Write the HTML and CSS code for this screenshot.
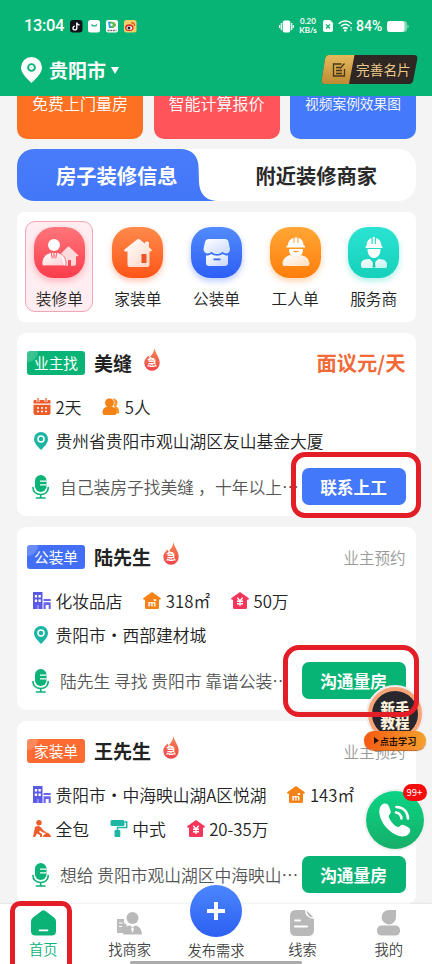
FILE: index.html
```html
<!DOCTYPE html>
<html lang="zh-CN">
<head>
<meta charset="utf-8">
<title>装修</title>
<link rel="stylesheet" href="styles.css">
</head>
<body>
<svg class="defs" width="0" height="0">
  <defs>
    <linearGradient id="gw" x1="0" y1="0" x2="1" y2="1"><stop offset="0" stop-color="#fff"/><stop offset="1" stop-color="#fff" stop-opacity=".72"/></linearGradient>
    <linearGradient id="gf" x1="0" y1="0" x2="0" y2="1"><stop offset="0" stop-color="#f58a50"/><stop offset="1" stop-color="#f0434a"/></linearGradient>
    <symbol id="flame" viewBox="0 0 16 23"><path d="M10.5 0C11 5 15.7 9 15.7 15A7.7 7.7 0 0 1 .3 15C.3 11 3 9.500 4.200 7.500C5 8 5 9 5.200 9.600C8 7.500 10 4 10.500 0Z" fill="url(#gf)"/><text x="8" y="18" text-anchor="middle" font-size="10" font-weight="700" fill="#fff">急</text></symbol>
    <symbol id="pin" viewBox="0 0 14 18"><path d="M7 0a7 7 0 0 1 7 7c0 4-3.500 7.500-7 11C3.500 14.500 0 11 0 7a7 7 0 0 1 7-7Z" fill="#1cb5a3"/><circle cx="7" cy="7" r="3" fill="none" stroke="#fff" stroke-width="1.500"/></symbol>
    <symbol id="mic" viewBox="0 0 17 24"><rect x="3" y="0" width="11.500" height="17" rx="5.700" fill="#0bb377"/><path d="M8 6.200h6.500M8 9.800h6.500" stroke="#fff" stroke-width="1.300"/><path d="M1 12.500c0 4 3 7 7.700 7s7.500-3 7.500-7M8.700 19.500v3.500M4.500 23h8.500" fill="none" stroke="#0bb377" stroke-width="1.700" stroke-linecap="round"/></symbol>
    <symbol id="building" viewBox="0 0 18 17"><path d="M0 0h9.500v17H0Z" fill="#5a58e6"/><path d="M1.800 3h2.300v2.400H1.800ZM5.500 3h2.300v2.400H5.500ZM1.800 7.600h2.300V10H1.800ZM5.500 7.600h2.300V10H5.500Z" fill="#fff"/><path d="M4 13.500h2V17H4ZM10.500 7h7.200v2h-7.200ZM10.500 10.200h7.200V17h-2v-4h-3v4h-2.200Z" fill="#6865e9"/><path d="M3.800 13h2.200v4H3.800Z" fill="#8d8bf0"/></symbol>
    <symbol id="area" viewBox="0 0 18 17"><path d="M9 0l8.500 6c.8.700.4 1.700-.5 1.700h-1V15.500c0 .9-.5 1.500-1.500 1.500h-11C2.500 17 2 16.400 2 15.500V7.700H1C.1 7.700-.3 6.700.5 6Z" fill="#f58216"/><text x="9" y="13.500" text-anchor="middle" font-size="8.500" font-weight="700" fill="#fff">㎡</text></symbol>
    <symbol id="money" viewBox="0 0 18 17"><path d="M9 0l8.500 6c.8.700.4 1.700-.5 1.700h-1V15.500c0 .9-.5 1.500-1.500 1.500h-11C2.500 17 2 16.400 2 15.500V7.700H1C.1 7.700-.3 6.700.5 6Z" fill="#f5365a"/><path d="M6.300 5.800L9 9l2.700-3.200M9 9v5M6 9.300h6M6 11.700h6" fill="none" stroke="#fff" stroke-width="1.400"/></symbol>
  </defs>
</svg>
<div class="phone">
  <header class="header">
    <div class="status">
      <span class="clock">13:04</span>
      <svg class="apps" width="67" height="13" viewBox="0 0 67 13">
        <rect width="12.500" height="12.500" rx="3" fill="#10131c"/><path d="M6.800 2.500v5.500a1.900 1.900 0 1 1-1.900-1.900M6.800 2.500c.2 1.600 1.200 2.400 2.700 2.500" fill="none" stroke="#fff" stroke-width="1.400"/>
        <rect x="18" width="12" height="12.500" rx="2.500" fill="#fff"/><path d="M21.500 4.500c.7 2 4.700 2 5.400 0" fill="none" stroke="#12a56d" stroke-width="1.200"/>
        <rect x="36" width="12" height="12.500" rx="2" fill="#fff"/><path d="M38 1.500l5.500 1v5.500L39 8Z" fill="#269ee4"/><path d="M40 1.500c3 0 6 1.500 6 3.500s-3 3-5 3Z" fill="#62ba42"/><circle cx="41.500" cy="4.700" r="1.200" fill="#fff"/><path d="M37.500 10.500h9" stroke="#777" stroke-dasharray="2 .7" stroke-width="1.500"/>
        <rect x="54" width="12.500" height="12.500" rx="2.500" fill="#f7d066"/><ellipse cx="59.300" cy="7.700" rx="4.300" ry="3.400" fill="#db3232"/><ellipse cx="59.300" cy="8" rx="2.800" ry="2.100" fill="#fff"/><circle cx="59" cy="8" r="1.500" fill="#222"/><path d="M61 3c2.500-.6 4 .8 3.300 3" fill="none" stroke="#db4932" stroke-width="1.200"/>
      </svg>
      <span class="grow"></span>
      <svg width="15" height="13" viewBox="0 0 15 13"><rect x="3.700" y=".5" width="7.600" height="12" rx="1.800" fill="#fff"/><path d="M2.300 3v7M12.700 3v7M.6 5v3M14.400 5v3" stroke="#fff" stroke-width="1.200"/></svg>
      <span class="speed"><span>0.20</span><span>KB/s</span></span>
      <svg class="sim" width="10" height="12" viewBox="0 0 10 12"><path d="M2 0h5l3 3v7a2 2 0 0 1-2 2H2a2 2 0 0 1-2-2V2a2 2 0 0 1 2-2Z" fill="#fff"/><path d="M3 4.500l4 4M7 4.500l-4 4" stroke="#07b475" stroke-width="1.300"/></svg>
      <svg class="wifi" width="15" height="12" viewBox="0 0 15 12"><path d="M.7 3.700C4.500.2 10 .2 13.800 3.700M3 6.200c2.600-2.300 6-2.300 8.600 0M5 8.600c1.500-1.300 3.100-1.300 4.600 0" fill="none" stroke="#fff" stroke-width="1.500"/><circle cx="7.300" cy="10.500" r="1.300" fill="#fff"/><path d="M13 7v4" stroke="#fff" stroke-width="1.200" stroke-dasharray="1.500 .8"/></svg>
      <span class="pct">84%</span>
      <svg class="batt" width="22" height="11" viewBox="0 0 22 11"><rect width="20" height="11" rx="3" fill="#7bd7b3"/><rect width="17.500" height="11" rx="3" fill="#fff"/><path d="M20.500 3.500c1.500.5 1.500 3.500 0 4Z" fill="#9fe2c8"/></svg>
    </div>
    <div class="city">
      <svg width="21" height="26" viewBox="0 0 21 26"><path d="M10.500 0A10.500 10.500 0 0 1 21 10.500c0 6-6 11-10.500 15.500C6 21.500 0 16.500 0 10.500A10.500 10.500 0 0 1 10.500 0Z" fill="#fff"/><circle cx="10.500" cy="10.500" r="3.400" fill="none" stroke="#07b475" stroke-width="1.900"/></svg>
      <b>贵阳市</b>
      <svg class="caret" width="8" height="7" viewBox="0 0 8 7"><path d="M0 0h8L4 7Z" fill="#fff"/></svg>
      <span class="grow"></span>
      <div class="vip">
        <svg class="vipbg" width="97" height="29" viewBox="0 0 97 29"><defs><linearGradient id="gg" x1="0" y1="0" x2="0" y2="1"><stop offset="0" stop-color="#e6b95d"/><stop offset="1" stop-color="#bd8b33"/></linearGradient></defs><path d="M8 0h85q4 0 3.300 4l-4 21q-.8 4-4.300 4H4q-4 0-3.300-4L4 4Q4.800 0 8 0Z" fill="#2f2723"/><path d="M8 0h25.500L28 29H4q-4 0-3.300-4L4 4Q4.800 0 8 0Z" fill="url(#gg)"/><path d="M20.500 9h-8v12h11v-7M15 12.500h4M15 15.500h6M15 18.500h6M19 13.500l4.500-5" fill="none" stroke="#493719" stroke-width="1.300"/></svg>
        <span>完善名片</span>
      </div>
    </div>
  </header>

  <main class="content">
    <section class="banners">
      <div class="banner b1">免费上门量房</div>
      <div class="banner b2">智能计算报价</div>
      <div class="banner b3">视频案例效果图</div>
    </section>

    <section class="tabs">
      <svg class="tabbg" width="199" height="52" viewBox="0 0 199 52"><defs><linearGradient id="gt" x1="0" y1="0" x2="0" y2="1"><stop offset="0" stop-color="#497cfa"/><stop offset="1" stop-color="#4277f8"/></linearGradient></defs><path d="M18 0h145c12 0 18 7 18.500 17l.5 16c.4 11 6 18 17 19H18C7 52 0 45 0 34V18C0 7 7 0 18 0Z" fill="url(#gt)"/></svg>
      <b class="tab on">房子装修信息</b><b class="tab">附近装修商家</b>
    </section>

    <section class="cats">
      <div class="cat sel"><div class="ic c1"><svg width="51" height="51" viewBox="0 0 51 51"><path d="M27 26.500l6.500-6.500q1-.8 2 0l8.500 8q.8 1-.5 1.300H42V37q0 1.800-1.800 1.800H37V33h-3v5.800h-4Z" fill="#fff" opacity=".78"/><path d="M8 37c0-7 4-10.500 9-11.500h6c5.500 1 9 4.500 9 11.500q0 1.800-1.500 1.800h-21Q8 38.800 8 37Z" fill="url(#gw)" stroke="#f65562" stroke-width=".8"/><circle cx="20" cy="18" r="6" fill="#fff"/><path d="M17.300 25.500l.9 6M22.700 25.500l-.9 6" fill="none" stroke="#f8616b" stroke-width="1"/><path d="M19.200 25.500h1.600l.7 4.500-1.500 1.500-1.500-1.500Z" fill="#f8616b" opacity=".6"/></svg></div><span>装修单</span></div>
      <div class="cat"><div class="ic c2"><svg width="51" height="51" viewBox="0 0 51 51"><path d="M25 12.500q1.500-1 3 0l5 4.200v-1.500q2-1.500 4 0v5l2.500 2.300q1 1.300-.5 2h-1.500V37.500q0 2.500-2.500 2.500H18q-2.500 0-2.500-2.500V24.500H13q-1.500-.7-.5-2Z" fill="url(#gw)"/><rect x="29.500" y="27" width="5" height="9" fill="#ed5524"/></svg></div><span>家装单</span></div>
      <div class="cat"><div class="ic c3"><svg width="51" height="51" viewBox="0 0 51 51"><path d="M15 28.500c2 .3 4-.5 5.300-1.500 3 2.300 8.400 2.300 11.400 0 1.300 1 3.300 1.800 5.300 1.500V36q0 3-3 3H18q-3 0-3-3Z" fill="url(#gw)"/><path d="M18 12h16q3 0 3.500 3l1.500 7c.3 5-5 5.500-7.500 2.700-3 3.200-8 3.200-11 0C18 27.500 12.500 27 12.500 22L14 15q.8-3 4-3Z" fill="url(#gw)"/><rect x="22.500" y="31.500" width="7" height="1.800" fill="#346be9"/></svg></div><span>公装单</span></div>
      <div class="cat"><div class="ic c4"><svg width="51" height="51" viewBox="0 0 51 51"><path d="M18 18c0-4 3-6.500 5.500-7v5h1v-5.500h3v5.500h1v-5c3 .7 5 3.500 5 7l1.500 1v1.500H16.500V19Z" fill="#fff"/><path d="M19 22h14c0 6-3 8-7 8s-7-2-7-8Z" fill="#fff"/><path d="M23.500 24.500h5" stroke="#f49727" stroke-width="1.300"/><path d="M12.500 36.500C13 30 19 27.500 22 28.500c2 2 6 2 8 0 4-.5 9 2 9.500 8q0 2.500-2 2.500h-23q-2 0-2-2.500Z" fill="url(#gw)"/></svg></div><span>工人单</span></div>
      <div class="cat"><div class="ic c5"><svg width="51" height="51" viewBox="0 0 51 51"><path d="M18.500 19c0-5 3-7.500 5-8v6h1.300v-7h2v7H28v-6c3 .7 5.500 4 5.500 8l1 1v1H17.500v-1Z" fill="#fff"/><path d="M19.500 22h13c0 6-3 9-6.500 9s-6.500-3-6.500-9Z" fill="#fff"/><path d="M13 39c-.5-5 2-6.500 8.500-7l4.500 4 4.500-4c6.500.5 9 2 8.500 7 0 1.500-.5 2-2 2H15q-2 0-2-2Z" fill="url(#gw)"/><path d="M24.500 34.500h3l-.5 2 .5 4h-3l.5-4Z" fill="#1bc7ae"/></svg></div><span>服务商</span></div>
    </section>

    <article class="card">
      <div class="top"><span class="tag green">业主找</span><b>美缝</b><svg class="flame" width="16" height="23"><use href="#flame"/></svg><span class="grow"></span><b class="price">面议元/天</b></div>
      <div class="row">
        <span class="item i1"><svg width="17" height="17" viewBox="0 0 17 17"><path d="M0 3q0-1 1-1h15q1 0 1 1v2.500H0ZM0 6.700h17V15q0 2-2 2H2q-2 0-2-2Z" fill="#ee5b2b"/><path d="M4.500 0v4M12.500 0v4" stroke="#fff" stroke-width="3"/><path d="M4.500 0v4M12.500 0v4" stroke="#ee5b2b" stroke-width="1.300"/><path d="M3.500 10h2M7.500 10h2M11.500 10h2M3.500 13.500h2M7.500 13.500h2M11.500 13.500h2" stroke="#fff" stroke-width="1.600"/></svg>2天</span>
        <span class="item"><svg width="17" height="17" viewBox="0 0 17 17"><path d="M10.500.5c5 0 5.500 5.500 3 8 2 .8 3.500 3 3.300 5.500q0 1.500-1.500 1.500H13Z" fill="#f9972e"/><circle cx="7" cy="4.800" r="4.800" fill="#f58216" stroke="#fff" stroke-width=".7"/><path d="M0 14.500C0 10 3 8.500 7 8.500s7 1.500 7 6q0 2.500-2 2.500H2q-2 0-2-2.500Z" fill="#f58216"/></svg>5人</span>
      </div>
      <div class="row"><span class="item"><svg class="pin" width="14" height="18"><use href="#pin"/></svg>贵州省贵阳市观山湖区友山基金大厦</span></div>
      <div class="foot"><svg width="17" height="24"><use href="#mic"/></svg><p>自己装房子找美缝<span class="comma">，</span>十年以上<span class="dots">⋯</span></p><b class="btn blue">联系上工</b></div>
    </article>

    <article class="card">
      <div class="top"><span class="tag bluet">公装单</span><b>陆先生</b><svg class="flame" width="16" height="23"><use href="#flame"/></svg><span class="grow"></span><span class="note">业主预约</span></div>
      <div class="row">
        <span class="item"><svg width="18" height="17"><use href="#building"/></svg>化妆品店</span>
        <span class="item"><svg width="18" height="17"><use href="#area"/></svg>318㎡</span>
        <span class="item"><svg width="18" height="17"><use href="#money"/></svg>50万</span>
      </div>
      <div class="row"><span class="item"><svg class="pin" width="14" height="18"><use href="#pin"/></svg>贵阳市・西部建材城</span></div>
      <div class="foot"><svg width="17" height="24"><use href="#mic"/></svg><p>陆先生 寻找 贵阳市 靠谱公装<span class="dots">⋯</span></p><b class="btn">沟通量房</b></div>
    </article>

    <article class="card">
      <div class="top"><span class="tag orange">家装单</span><b>王先生</b><svg class="flame" width="16" height="23"><use href="#flame"/></svg><span class="grow"></span><span class="note">业主预约</span></div>
      <div class="row">
        <span class="item"><svg width="18" height="17"><use href="#building"/></svg>贵阳市・中海映山湖A区悦湖</span>
        <span class="item"><svg width="18" height="17"><use href="#area"/></svg>143㎡</span>
      </div>
      <div class="row">
        <span class="item"><svg width="18" height="17" viewBox="0 0 18 17"><circle cx="6" cy="2.700" r="2.700" fill="#ee5b2b"/><path d="M2 7q3-2 5.500 0l3.500 4 2.500 1-.5 1.300-3.500-1L7 10.500 6 12l3 2v3H7v-2L4 13.500 2 17H0Z" fill="#ee5b2b"/><path d="M10 17c0-2 1.500-2.500 2.500-3.500l1.500-1 2 1c.5 1.300 2 1.500 2 3.500Z" fill="#ee5b2b"/></svg>全包</span>
        <span class="item"><svg width="17" height="17" viewBox="0 0 17 17"><rect x="0" y="0" width="14" height="6" rx="1.500" fill="#1fb6a3"/><path d="M14 2h2.200v5.500H7V11" fill="none" stroke="#1fb6a3" stroke-width="1.500"/><rect x="4" y="10" width="5.800" height="7" rx="1" fill="#1fb6a3"/></svg>中式</span>
        <span class="item"><svg width="18" height="17"><use href="#money"/></svg>20-35万</span>
      </div>
      <div class="foot"><svg width="17" height="24"><use href="#mic"/></svg><p>想给 贵阳市观山湖区中海映山<span class="dots">⋯</span></p><b class="btn">沟通量房</b></div>
    </article>
  </main>

  <div class="guide">
    <div class="disc"><span>新手</span><span>教程</span></div>
    <div class="pill"><svg width="5" height="7" viewBox="0 0 5 7"><path d="M0 0l5 3.500L0 7Z" fill="#291305"/></svg>点击学习</div>
  </div>
  <div class="call"><svg width="58" height="58" viewBox="0 0 58 58"><path d="M17 13c2.500-1.200 5 0 6 2.500l1.500 4c.8 2-.3 3.500-1.500 5-.7 1 0 2.500 1.500 5s4 5 6 6c1.500.8 2.500.5 3.500-.5 1.500-1.500 3-1.500 5-.5l3.500 2c2 1 2.300 3.500 1 5.500C41 45.500 37 46 33 45 23 42 15 32 13.500 23c-.7-4.500.5-8.500 3.500-10Z" fill="#fff"/><path d="M30 21.500c3.500.7 5 2.500 5.500 6M30.500 16c6.500.3 11 4.500 11.500 11.500" fill="none" stroke="#fff" stroke-width="2.600" stroke-linecap="round"/></svg><span class="badge">99+</span></div>

  <nav class="nav">
    <div class="nv on"><svg width="25" height="26" viewBox="0 0 25 26"><path d="M10.500 1q2-1.400 4 0l8.500 6.500q2 1.500 2 4V21q0 4.500-4.500 4.500h-16Q0 25.500 0 21V11.500q0-2.500 2-4Z" fill="#0bb377"/><path d="M8.500 20.300h8" stroke="#fff" stroke-width="1.700" stroke-linecap="round"/></svg><span>首页</span></div>
    <div class="nv n2"><svg width="25" height="23" viewBox="0 0 25 23"><path d="M0 7h7v4l3 2-3 8H0Z" fill="#bbb"/><path d="M2 11h3.500M2 14.500h3" stroke="#fff" stroke-width="1.200"/><circle cx="15.500" cy="6" r="6" fill="#b9b9b9"/><path d="M6 22.500c.5-6 3-8.500 7-9l2.500 2 2.500-2c4 .5 6.500 3 7 9Z" fill="#b9b9b9"/><path d="M15.500 15l-1.500 2 1.500 4 1.500-4Z" fill="#fff"/></svg><span>找商家</span></div>
    <div class="nv n3"><i class="plus"></i><span>发布需求</span></div>
    <div class="nv n4"><svg width="24" height="26" viewBox="0 0 24 26"><path d="M6 0h9q0 8 9 9v11q0 6-6 6H6q-6 0-6-6V6q0-6 6-6Z" fill="#b9b9b9"/><path d="M16.500.5l7 7q-6.500-.5-7-7Z" fill="#b9b9b9"/><path d="M5 10.500h5M5 16.500h12" stroke="#fff" stroke-width="2" stroke-linecap="round"/></svg><span>线索</span></div>
    <div class="nv n4"><svg width="23" height="26" viewBox="0 0 23 26"><path d="M12 0h7v7a7.200 7.200 0 1 1-7-7Z" fill="#b9b9b9"/><rect x="0" y="15.500" width="23" height="10" rx="4.500" fill="#b9b9b9"/></svg><span>我的</span></div>
    <i class="bar"></i>
  </nav>

  <div class="mark m1"></div><div class="mark m2"></div><div class="mark m3"></div>
</div>
</body>
</html>
```
FILE: styles.css
```css
* { box-sizing: border-box; }
body { margin: 0; font-family: "Noto Sans CJK SC", sans-serif; font-weight: 350; color: #222; }
b { font-weight: 700; }
svg { display: block; flex: none; }
.defs { position: absolute; }
.phone { position: relative; width: 432px; height: 964px; overflow: hidden; background: #f4f4f4; }
.grow { flex: 1; }

.header { height: 96px; background: #07b475; color: #fff; }
.status { height: 51px; display: flex; align-items: center; padding: 1px 23px 0 24px; }
.clock { width: 46px; font: 500 16.500px/20px Roboto, sans-serif; letter-spacing: -.4px; }
.speed { display: flex; flex-direction: column; align-items: center; width: 20px; margin-left: 4px; font: 700 8px/9px Lato, sans-serif; }
.sim { margin-left: 5px; }
.wifi { margin-left: 5px; }
.pct { width: 29px; margin-left: 3px; font: 500 14px/16px Roboto, sans-serif; white-space: nowrap; }
.batt { margin-left: 2px; }
.city { height: 38px; display: flex; align-items: center; padding: 0 14px 0 21px; }
.city b { margin-left: 7px; font-size: 19px; line-height: 28px; }
.caret { margin-left: 5px; }
.vip { position: relative; width: 97px; height: 29px; margin-top: -1px; padding-left: 35px; font-size: 13.700px; line-height: 28px; color: #ebc98b; font-weight: 400; }
.vipbg { position: absolute; left: 0; top: 0; }
.vip span { position: relative; white-space: nowrap; }

.content { padding: 0 16px 0 17px; }
.banners { display: grid; grid-template-columns: repeat(3, 126px); justify-content: space-between; }
.banner { height: 42.500px; border-radius: 0 0 10px 10px; color: #fff; font-size: 16px; line-height: 15px; text-align: center; white-space: nowrap; }
.b1 { background: #ff7122; }
.b2 { background: #ff555a; }
.b3 { background: #4579fb; font-size: 13.700px; }
.tabs { position: relative; height: 52px; margin-top: 10.500px; display: flex; background: #fff; border-radius: 18px; }
.tabbg { position: absolute; left: 0; top: 0; }
.tab { position: relative; flex: 1; text-align: center; font-size: 20.300px; line-height: 53px; color: #292929; font-weight: 700; }
.tab.on { color: #fff; }
.cats { height: 110px; margin-top: 11px; padding: 9px 3px 10px 3px; background: #fff; border-radius: 8px; display: flex; }
.cat { flex: 1; display: flex; flex-direction: column; align-items: center; margin: 0 5.200px; padding-top: 5px; border: 1px solid transparent; border-radius: 10px; font-size: 15.700px; line-height: 22px; white-space: nowrap; }
.sel { background: #ffedf1; border-color: #eda7b5; }
.ic { width: 51px; height: 51px; border-radius: 20px; margin-bottom: 10px; }
.c1 { background: linear-gradient(#ff767a, #fb3c4c); box-shadow: 0 3px 6px #fb3c4c55; }
.c2 { background: linear-gradient(#ff8a4c, #ff5518); box-shadow: 0 3px 6px #ff551855; }
.c3 { background: linear-gradient(#528bfb, #2c5ef5); box-shadow: 0 3px 6px #2c5ef555; }
.c4 { background: linear-gradient(#ffa636, #ff7e0b); box-shadow: 0 3px 6px #ff7e0b55; }
.c5 { background: linear-gradient(#2be3d2, #15d0ba); box-shadow: 0 3px 6px #15d0ba55; }

.card { height: 183.500px; margin-top: 10.500px; padding: 15px 10.500px 0 10px; background: #fff; border-radius: 9px; }
.top { height: 30px; display: flex; align-items: center; }
.tag { width: 58px; height: 24px; border-radius: 3px; color: #fff; font-size: 14.700px; line-height: 23px; text-align: center; font-weight: 400; margin-right: 9px; background: radial-gradient(circle at 0 0, #ffffff33 0 10px, transparent 12px) #07b475; }
.bluet { background-color: #426ff6; }
.orange { background-color: #fb6b32; }
.top b { font-size: 19px; line-height: 30px; }
.flame { margin: -6px 0 0 12px; }
.top .price { color: #f26a38; font-size: 20.300px; font-weight: 700; line-height: 31px; }
.note { font-size: 15.500px; color: #999; }
.row { height: 34px; display: flex; align-items: center; gap: 20.800px; padding-left: 6px; font-size: 16.750px; line-height: 34px; white-space: nowrap; }
.top + .row { margin-top: 12px; }
.item { display: flex; align-items: center; }
.item svg { width: 18px; margin-right: 4.500px; }
.item svg.pin { width: 14px; margin: 0 7.500px 0 1px; }
.foot { height: 37px; margin-top: 10.500px; display: flex; align-items: center; padding-left: 5px; }
.foot p { flex: 1; margin: 0 0 0 11px; font-size: 16.750px; line-height: 38px; color: #555; white-space: nowrap; }
.comma { display: inline-block; width: 21px; padding-left: 4px; }
.dots { display: inline-block; width: 14px; }
.btn { flex: none; width: 104px; height: 37px; border-radius: 7px; background: #07b475; color: #fff; text-align: center; font-size: 16.700px; line-height: 38px; font-weight: 700; }
.blue { background: #4378fb; }
.foot p { width: 0; }

.guide { position: absolute; left: 363px; top: 686px; width: 64px; height: 66px; }
.disc { width: 56px; height: 56px; margin: 0 auto; border-radius: 50%; border: 5px solid #f8a478; outline: 2px solid #eee; outline-offset: -1px; background: #28272d; color: #fff0dc; display: flex; flex-direction: column; align-items: center; padding-top: 10px; font-size: 14.500px; line-height: 14px; font-weight: 900; }
.disc span { white-space: nowrap; }
.pill { position: absolute; left: 1px; top: 45px; width: 62px; height: 19px; border-radius: 10px; background: linear-gradient(90deg, #f55a13, #f5a02c); box-shadow: 0 1px 1px #bc5f1d; color: #291305; display: flex; align-items: center; justify-content: center; gap: 1px; font-size: 9.200px; line-height: 18px; font-weight: 700; white-space: nowrap; }
.call { position: absolute; left: 366px; top: 791px; width: 58px; height: 58px; border-radius: 50%; background: linear-gradient(#0bd385, #16af68); box-shadow: 0 0 0 2px #f0f0f0; }
.badge { position: absolute; left: 36.500px; top: -7px; width: 24px; height: 17px; border-radius: 9px; background: #f80b0b; color: #fff; font-size: 9.500px; line-height: 16px; text-align: center; font-weight: 400; }

.nav { position: absolute; left: 0; top: 904px; width: 432px; height: 60px; background: #fff; box-shadow: 0 -1px 2px #0001; display: flex; }
.nv { flex: 1; display: flex; flex-direction: column; align-items: center; justify-content: flex-end; padding-bottom: 4px; gap: 2px; font-size: 14.300px; line-height: 22px; color: #444; white-space: nowrap; }
.nv.on { color: #0bb377; }
.n2 { gap: 3px; }
.n3 { gap: 2.500px; padding-bottom: 3px; }
.plus { flex: none; width: 52px; height: 52px; border-radius: 50%; background: linear-gradient(#fff, #fff) center / 18px 4px no-repeat, linear-gradient(#fff, #fff) center / 4px 18px no-repeat, linear-gradient(#4b87fd, #2d5ff2); }
.bar { position: absolute; left: 130px; top: 57px; width: 172px; height: 3px; border-radius: 2px; background: #aaa; }

.mark { position: absolute; border: 5px solid #e41e26; }
.m1 { left: 291px; top: 451.500px; width: 130px; height: 66.500px; border-radius: 14px; }
.m2 { left: 283px; top: 645px; width: 136px; height: 72px; border-radius: 16px; }
.m3 { left: 10px; top: 901px; width: 62px; height: 75px; border-radius: 10px; }
```
